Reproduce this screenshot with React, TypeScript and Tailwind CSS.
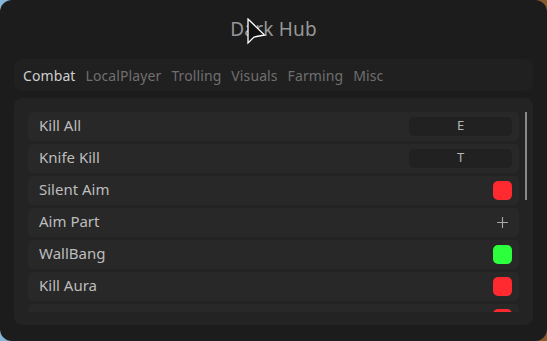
import { Plus } from 'lucide-react';

type Row =
  | { label: string; kind: 'key'; value: string }
  | { label: string; kind: 'toggle'; on: boolean }
  | { label: string; kind: 'dropdown' };

const tabs = ['Combat', 'LocalPlayer', 'Trolling', 'Visuals', 'Farming', 'Misc'];

const rows: Row[] = [
  { label: 'Kill All', kind: 'key', value: 'E' },
  { label: 'Knife Kill', kind: 'key', value: 'T' },
  { label: 'Silent Aim', kind: 'toggle', on: false },
  { label: 'Aim Part', kind: 'dropdown' },
  { label: 'WallBang', kind: 'toggle', on: true },
  { label: 'Kill Aura', kind: 'toggle', on: false },
  { label: '', kind: 'toggle', on: false },
];

function Cursor() {
  return (
    <svg
      className="pointer-events-none absolute left-[247px] top-[18px]"
      width="19"
      height="27"
      viewBox="0 0 19 27"
    >
      <path d="M1 1 L1 25 L7 19 L17.5 17 Z" fill="#111" stroke="#fff" strokeWidth="1.3" strokeLinejoin="miter" />
    </svg>
  );
}

function RowControl({ row }: { row: Row }) {
  if (row.kind === 'key') {
    return (
      <div className="flex h-[19px] w-[103px] items-center justify-center rounded-[5px] bg-[#212121] pb-[1px] text-[13px] text-[#b4b4b4]">
        {row.value}
      </div>
    );
  }
  if (row.kind === 'toggle') {
    return <div className={`h-[19px] w-[19px] rounded-[5px] ${row.on ? 'bg-[#2cff3c]' : 'bg-[#ff2a30]'}`} />;
  }
  return (
    <div className="flex h-[19px] w-[19px] items-center justify-center text-[#a8a8a8]">
      <Plus className="h-[17px] w-[17px]" strokeWidth={1.6} />
    </div>
  );
}

export default function App() {
  return (
    <div
      className="h-[341px] w-[547px] overflow-hidden bg-[linear-gradient(90deg,#86b6d8_0%,#2a2a2a_40%,#2a2a2a_70%,#8a5a2a_100%)]"
      style={{ fontFamily: '"Noto Sans", "Liberation Sans", sans-serif' }}
    >
      <div className="relative flex h-full w-full flex-col rounded-[12px] bg-[#1c1c1c] px-[14px] pb-[16px]">
        {/* Title */}
        <div className="flex h-[59px] items-center justify-center">
          <span className="text-[19px] tracking-[0.2px] text-[#969696]">Dark Hub</span>
        </div>
        <Cursor />

        {/* Tabs */}
        <div className="flex h-[32px] items-center gap-[10px] rounded-[8px] bg-[#202020] px-[9px] text-[14px] tracking-[0.1px]">
          {tabs.map((t, i) => (
            <span key={t} className={i === 0 ? 'text-[#cfcfcf]' : 'text-[#6f6f6f]'}>
              {t}
            </span>
          ))}
        </div>

        {/* Content */}
        <div className="mt-[7px] flex flex-1 rounded-[8px] bg-[#232323] pl-[14px] pr-[6px] pt-[14px] pb-[13px]">
          <div className="flex h-[200px] flex-1 flex-col gap-[3px] overflow-hidden">
            {rows.map((r, i) => (
              <div
                key={i}
                className="flex h-[29px] shrink-0 items-center justify-between rounded-[5px] bg-[#282828] pl-[11px] pr-[7px]"
              >
                <span className="pb-[3px] text-[15px] text-[#bdbdbd]">{r.label}</span>
                <RowControl row={r} />
              </div>
            ))}
          </div>
          <div className="ml-[6px] w-[2px]">
            <div className="h-[88px] w-[2px] bg-[#8a8a8a]" />
          </div>
        </div>
      </div>
    </div>
  );
}
